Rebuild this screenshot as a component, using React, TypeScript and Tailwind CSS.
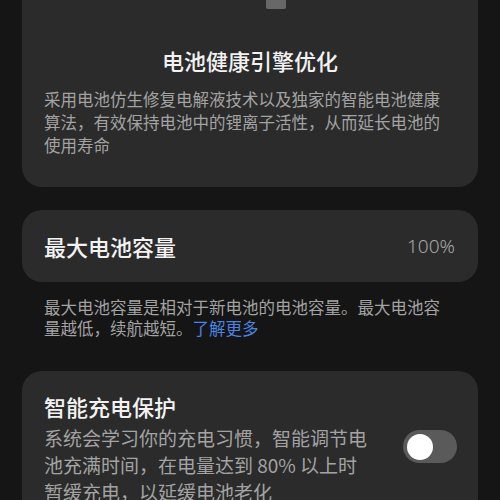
import React from "react";

export default function App() {
  const font = { fontFamily: '"Noto Sans CJK SC", "Noto Sans", sans-serif' };
  return (
    <div className="w-[500px] h-[500px] overflow-hidden bg-[#151515] px-[22px]" style={font}>
      {/* Top card */}
      <div className="w-[456px] bg-[#2b2b2b] rounded-b-[20px] px-[22px] pb-[30px]">
        <div className="mx-auto w-[20px] h-[9px] bg-[#686868] rounded-b-[2px] ml-[222px]" />
        <div className="mt-[36px] text-center text-[22px] leading-[30px] font-medium text-[#f2f2f2]">
          电池健康引擎优化
        </div>
        <div className="mt-[13px] text-[16.5px] leading-[23px] text-[#a3a3a3] whitespace-nowrap">
          采用电池仿生修复电解液技术以及独家的智能电池健康
          <br />
          算法，有效保持电池中的锂离子活性，从而延长电池的
          <br />
          使用寿命
        </div>
      </div>

      {/* Max capacity card */}
      <div className="mt-[23px] w-[456px] h-[72px] bg-[#2b2b2b] rounded-[20px] px-[22px] flex items-center justify-between">
        <span className="text-[22px] leading-[30px] font-medium text-[#f2f2f2]">最大电池容量</span>
        <span
          className="text-[19px] leading-[30px] font-light text-[#a8a8a8] mr-[1px]"
          style={{ fontFamily: '"Noto Sans", sans-serif' }}
        >
          100%
        </span>
      </div>

      <div className="mt-[15px] px-[22px] text-[16.5px] leading-[21px] text-[#a3a3a3] whitespace-nowrap">
        最大电池容量是相对于新电池的电池容量。最大电池容
        <br />
        量越低，续航越短。<span className="text-[#4a84e4]">了解更多</span>
      </div>

      {/* Smart charging card */}
      <div className="mt-[32px] w-[456px] h-[160px] bg-[#2b2b2b] rounded-t-[20px] pl-[22px] pr-[21px] pt-[20px]">
        <div className="text-[22px] leading-[30px] font-medium text-[#f2f2f2]">智能充电保护</div>
        <div className="mt-[3px] flex items-start justify-between">
          <div className="text-[19px] leading-[27px] text-[#a3a3a3] whitespace-nowrap">
            系统会学习你的充电习惯，智能调节电
            <br />
            池充满时间，在电量达到 80% 以上时
            <br />
            暂缓充电，以延缓电池老化
          </div>
          <div className="mt-[6px] w-[54px] h-[33px] rounded-full bg-[#5a5a5a] flex items-center pl-[4px]">
            <div className="w-[26px] h-[26px] rounded-full bg-white" />
          </div>
        </div>
      </div>
    </div>
  );
}
